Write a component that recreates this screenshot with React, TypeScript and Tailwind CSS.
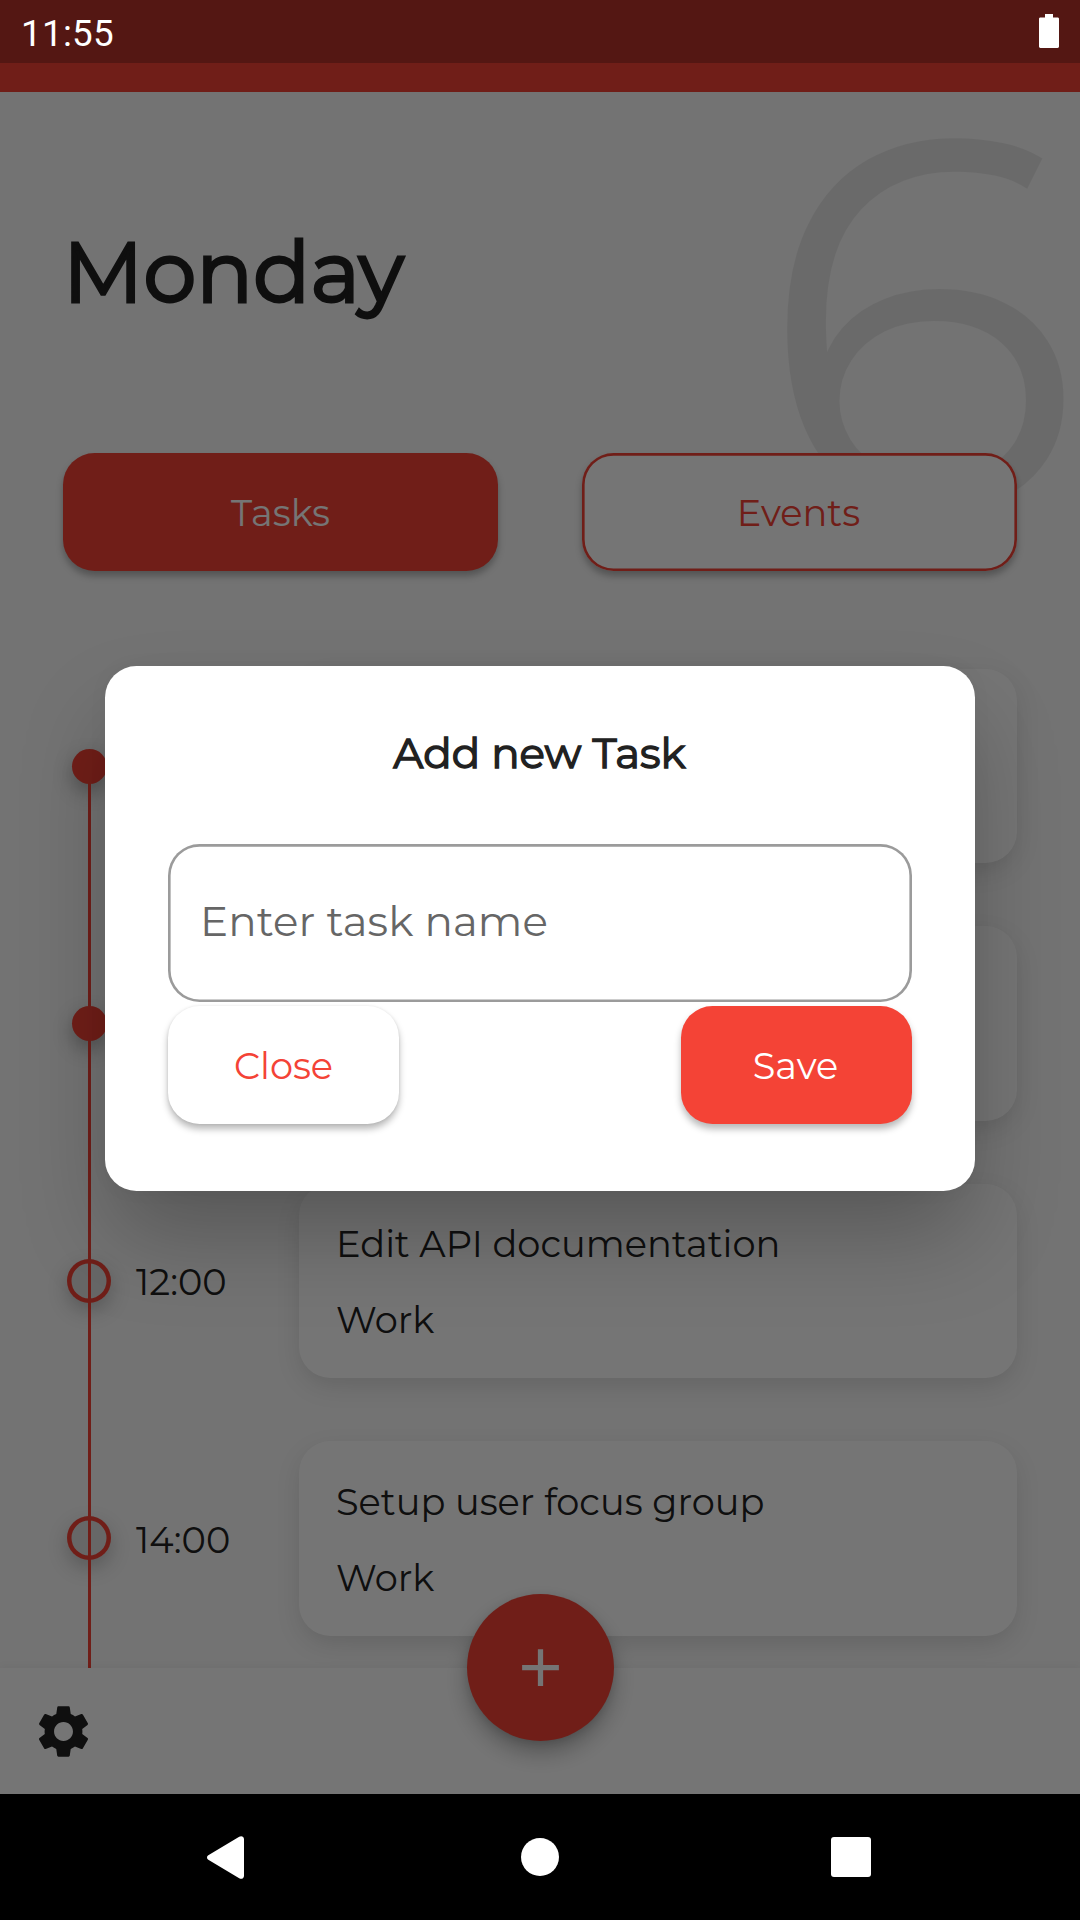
import { MdAdd, MdSettings } from "react-icons/md";

type Task = { time: string; title: string; tag: string; done: boolean };

const tasks: Task[] = [
  { time: "", title: "", tag: "", done: true },
  { time: "", title: "", tag: "", done: true },
  { time: "12:00", title: "Edit API documentation", tag: "Work", done: false },
  { time: "14:00", title: "Setup user focus group", tag: "Work", done: false },
];

function StatusBar() {
  return (
    <header className="relative z-20 flex h-[63px] shrink-0 items-start justify-between bg-[#541713] pt-[11px] pr-[21px] pl-[21px] text-white">
      <span className="mt-px font-['Roboto',sans-serif] text-[36.75px] leading-[43px] tracking-[0.3px]">11:55</span>
      <svg width="20" height="34" viewBox="0 0 20 34" className="mt-[3px]" fill="currentColor">
        <path d="M6 0h8v3.4h4.6c.8 0 1.4.6 1.4 1.4v27.8c0 .8-.6 1.4-1.4 1.4H1.4C.6 34 0 33.4 0 32.6V4.8c0-.8.6-1.4 1.4-1.4H6z" />
      </svg>
    </header>
  );
}

function TimelineRow({ task, first }: { task: Task; first: boolean }) {
  return (
    <li className="flex h-[257.5px] shrink-0 items-start">
      <div className="relative flex h-full w-[52px] flex-col items-center">
        {task.done ? (
          <span className="mt-[80px] size-[35px] rounded-full bg-[#f44336] shadow-[0_8px_20px_rgba(0,0,0,0.3)]" />
        ) : (
          <span className="mt-[75px] size-[44px] rounded-full bg-black/10 shadow-[0_8px_20px_rgba(0,0,0,0.22)] inset-ring-[4.5px] inset-ring-[#f44336]" />
        )}
        <span
          className={
            first
              ? "absolute top-[98px] bottom-0 left-[25px] w-[2.625px] bg-[#f44336]"
              : "absolute top-0 bottom-0 left-[25px] w-[2.625px] bg-[#f44336]"
          }
        />
      </div>
      <span className="flex h-[194.6px] w-[184px] items-center pt-[2px] pl-[21px] text-[36.75px]">{task.time}</span>
      <div className="flex h-[194.6px] w-[718px] flex-col justify-center gap-[31px] rounded-[31.5px] bg-white px-[37px] pt-[2px] shadow-[0_9px_26px_-2px_rgba(0,0,0,0.13)]">
        <span className="text-[36.75px] leading-[45px]">{task.title}</span>
        <span className="text-[36.75px] leading-[45px]">{task.tag}</span>
      </div>
    </li>
  );
}

function TabButton({ label, active }: { label: string; active?: boolean }) {
  return (
    <button
      className={
        active
          ? "flex h-[118px] w-[435px] items-center justify-center rounded-[31.5px] bg-[#f44336] pt-[2px] text-[36.75px] text-white shadow-[0_5px_7px_rgba(0,0,0,0.28)]"
          : "flex h-[118px] w-[435px] items-center justify-center rounded-[31.5px] bg-white pt-[2px] pr-[2px] text-[36.75px] text-[#f44336] shadow-[0_5px_7px_rgba(0,0,0,0.28)] inset-ring-[2.625px] inset-ring-[#f44336]"
      }
    >
      {label}
    </button>
  );
}

function AddTaskDialog() {
  return (
    <section className="flex h-[525px] w-[870px] flex-col rounded-[31.5px] bg-white px-[63px] pt-[61px] shadow-[0_50px_90px_-8px_rgba(0,0,0,0.25),0_0_20px_rgba(0,0,0,0.04)]">
      <h2 className="h-[52px] pr-px text-center text-[42px] leading-[52px] text-[#212121] [-webkit-text-stroke:1.4px_#212121]">
        Add new Task
      </h2>
      <div className="mt-[65px] flex h-[158px] shrink-0 items-center rounded-[31.5px] pb-[3px] pl-[32px] text-[42px] tracking-[0.08px] text-[#666666] inset-ring-[2.625px] inset-ring-[#9b9b9b]">
        Enter task name
      </div>
      <div className="mt-[4px] flex justify-between">
        <button className="h-[118px] w-[231px] rounded-[31.5px] bg-white pt-[2px] text-[36.75px] text-[#f44336] shadow-[0_5px_7px_rgba(0,0,0,0.28),0_0_3px_rgba(0,0,0,0.08)]">
          Close
        </button>
        <button className="h-[118px] w-[231px] rounded-[31.5px] bg-[#f44336] pt-[2px] pr-[2px] text-[36.75px] text-white shadow-[0_5px_7px_rgba(0,0,0,0.28)]">
          Save
        </button>
      </div>
    </section>
  );
}

function SystemNav() {
  return (
    <nav className="flex h-[126px] shrink-0 items-center bg-black pl-[207px] text-white">
      <svg width="37" height="43" viewBox="0 0 37 43" fill="currentColor">
        <path d="M1.3 19.3 32.2.7C34.5-.6 37 .6 37 3.3v36.400c0 2.700-2.500 3.900-4.800 2.600L1.300 23.700c-1.700-1-1.700-3.400 0-4.400z" />
      </svg>
      <span className="ml-[277px] size-[38px] rounded-full bg-white" />
      <span className="ml-[272px] size-[40px] rounded-[3px] bg-white" />
    </nav>
  );
}

export default function App() {
  return (
    <div className="relative flex h-[1920px] w-[1080px] flex-col overflow-hidden bg-[#fafafa] font-['Montserrat',sans-serif] text-[#212121]">
      <StatusBar />
      <div className="h-[29px] shrink-0 bg-[#f44336]" />

      <main className="relative h-[1576px] shrink-0 overflow-hidden">
        <span className="absolute top-[-91px] left-[760px] text-[525px] leading-[640px] text-[#e8e8e8]">6</span>
        <div className="relative flex flex-col px-[63px]">
          <h1 className="mt-[129px] h-[102px] text-[84px] leading-[102px] tracking-[0.2px] [-webkit-text-stroke:2.8px_#212121]">
            Monday
          </h1>
          <div className="mt-[130px] flex justify-between">
            <TabButton label="Tasks" active />
            <TabButton label="Events" />
          </div>
          <ul className="mt-[97.5px] flex flex-col">
            {tasks.map((task, i) => (
              <TimelineRow key={i} task={task} first={i === 0} />
            ))}
          </ul>
        </div>
      </main>

      <footer className="relative flex h-[126px] shrink-0 items-center bg-white pl-[31.5px] shadow-[0_-2px_8px_rgba(0,0,0,0.04)]">
        <MdSettings className="size-[63px] text-[#212121]" />
        <button className="absolute top-[-74px] left-[466.5px] flex size-[147px] items-center justify-center rounded-full bg-[#f44336] text-white shadow-[0_12px_24px_-2px_rgba(0,0,0,0.32),0_2px_8px_rgba(0,0,0,0.1)]">
          <MdAdd className="size-[63px]" />
        </button>
      </footer>

      <div className="absolute inset-x-0 top-[63px] bottom-[126px] z-10 flex justify-center bg-black/54 pt-[603px]">
        <AddTaskDialog />
      </div>

      <SystemNav />
    </div>
  );
}
